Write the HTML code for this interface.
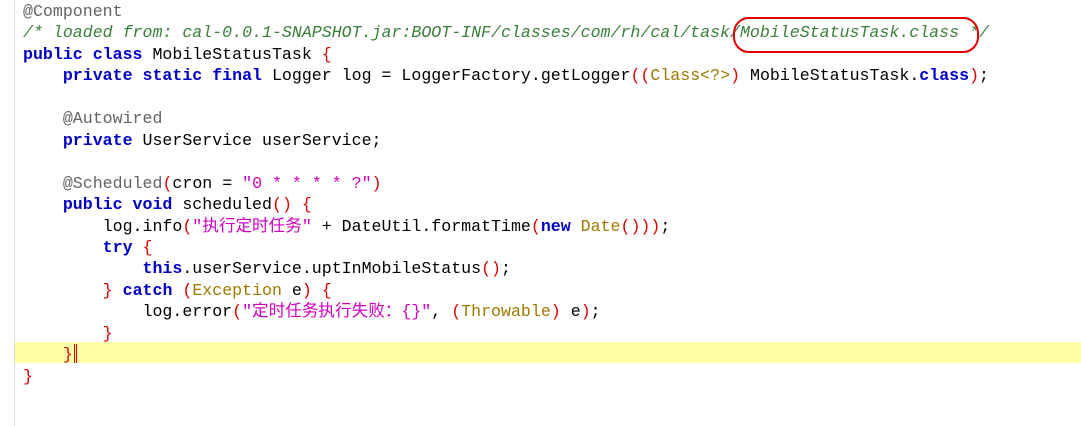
<!DOCTYPE html>
<html><head><meta charset="utf-8"><style>
html,body{margin:0;padding:0;background:#fff;width:1081px;height:426px;overflow:hidden;position:relative}
.gut{position:absolute;left:14px;top:0;width:1px;height:426px;background:#dcdcdc}
.hl{position:absolute;left:15px;top:342px;width:1066px;height:21px;background:#ffffa8}
pre{position:absolute;left:23px;top:1px;margin:0;font-family:"Liberation Mono","Noto Sans CJK SC",monospace;font-size:16.6px;line-height:21.45px;color:#000}
.a{color:#646464}.c{color:#3a7f3a;font-style:italic}.k{color:#0000c8;font-weight:bold}
.p{color:#e00000}.s{color:#d000c0}.t{color:#a07800}
.ov{position:absolute;left:733px;top:17px;width:242px;height:32px;border:2px solid #e00000;border-radius:16px}
.cur{display:inline-block;width:3px;height:19px;border-left:1px solid #e00;border-right:1px solid #e00;vertical-align:-4px;margin-left:1px;box-sizing:border-box}
</style></head><body>
<div class="gut"></div><div class="hl"></div>
<pre><span class="a">@Component</span>
<span class="c">/* loaded from: cal-0.0.1-SNAPSHOT.jar:BOOT-INF/classes/com/rh/cal/task/MobileStatusTask.class */</span>
<span class="k">public class</span> MobileStatusTask <span class="p">{</span>
    <span class="k">private static final</span> Logger log = LoggerFactory.getLogger<span class="p">((</span><span class="t">Class&lt;?&gt;</span><span class="p">)</span> MobileStatusTask.<span class="k">class</span><span class="p">)</span>;

    <span class="a">@Autowired</span>
    <span class="k">private</span> UserService userService;

    <span class="a">@Scheduled</span><span class="p">(</span>cron = <span class="s">"0 * * * * ?"</span><span class="p">)</span>
    <span class="k">public void</span> scheduled<span class="p">() {</span>
        log.info<span class="p">(</span><span class="s">"执行定时任务"</span> + DateUtil.formatTime<span class="p">(</span><span class="k">new</span> <span class="t">Date</span><span class="p">()))</span>;
        <span class="k">try</span> <span class="p">{</span>
            <span class="k">this</span>.userService.uptInMobileStatus<span class="p">()</span>;
        <span class="p">}</span> <span class="k">catch</span> <span class="p">(</span><span class="t">Exception</span> e<span class="p">) {</span>
            log.error<span class="p">(</span><span class="s">"定时任务执行失败：{}"</span>, <span class="p">(</span><span class="t">Throwable</span><span class="p">)</span> e<span class="p">)</span>;
        <span class="p">}</span>
    <span class="p">}</span><span class="cur"></span>
<span class="p">}</span></pre>
<div class="ov"></div>
</body></html>
